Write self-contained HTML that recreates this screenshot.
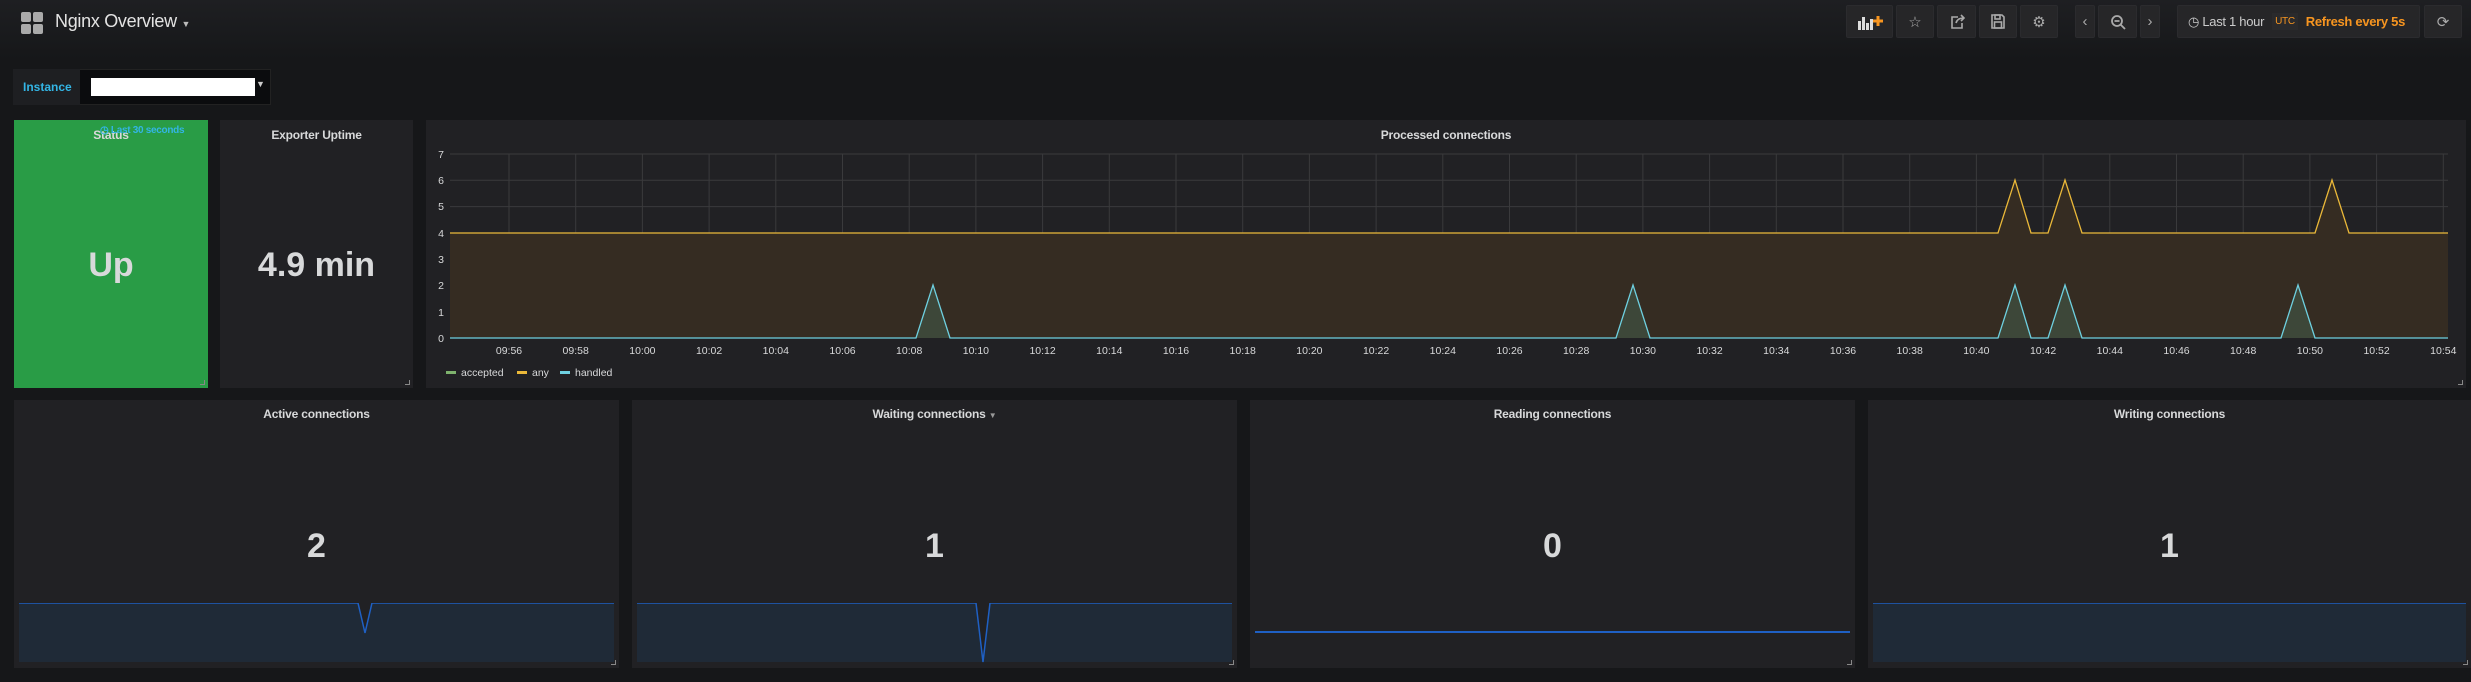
<!DOCTYPE html>
<html><head><meta charset="utf-8"><style>
*{margin:0;padding:0;box-sizing:border-box}
body{width:2471px;height:682px;background:#161719;font-family:"Liberation Sans",sans-serif;color:#d8d9da;position:relative;overflow:hidden}
.a{position:absolute;white-space:nowrap}
.panel{position:absolute;background:#212124}
.pt{position:absolute;left:0;right:0;text-align:center;font-size:12px;font-weight:bold;color:#d8d9da;letter-spacing:-0.2px}
.big{position:absolute;left:0;right:0;text-align:center;font-weight:bold;font-size:34px;color:#d8d9da}
.btn{position:absolute;top:5px;height:33px;background:#262628;border:1px solid #2b2b2e;border-radius:2px;display:flex;align-items:center;justify-content:center;color:#aaa;font-size:15px;white-space:nowrap}
.rz{position:absolute;right:3px;bottom:3px;width:5px;height:5px;border-right:1px solid #888;border-bottom:1px solid #888}
</style></head><body>
<div class="a" style="left:0;top:0;width:2471px;height:60px;background:linear-gradient(#1e1f22,#161719)"></div>
<div class="a" style="left:21px;top:12px;width:10px;height:10px;background:#aaa;border-radius:2px"></div>
<div class="a" style="left:33px;top:12px;width:10px;height:10px;background:#aaa;border-radius:2px"></div>
<div class="a" style="left:21px;top:24px;width:10px;height:10px;background:#aaa;border-radius:2px"></div>
<div class="a" style="left:33px;top:24px;width:10px;height:10px;background:#aaa;border-radius:2px"></div>
<div class="a" style="left:55px;top:11px;font-size:18px;color:#e3e3e3;letter-spacing:-0.3px">Nginx Overview <span style="font-size:9px;color:#bbb">▼</span></div>
<div class="btn" style="left:1846px;width:47px"><svg width="26" height="18"><g fill="#ddd"><rect x="1" y="8" width="3" height="9"/><rect x="5" y="4" width="3" height="13"/><rect x="9" y="10" width="3" height="7"/><rect x="13" y="6" width="3" height="11"/></g><path d="M21 3v10M16 8h10" stroke="#f79520" stroke-width="3"/></svg></div>
<div class="btn" style="left:1896px;width:38px">☆</div>
<div class="btn" style="left:1937px;width:39px"><svg width="16" height="16" fill="none" stroke="#aaa" stroke-width="1.6"><path d="M9 3H3v11h10V9"/><path d="M7 9c1-4 4-5 8-5M12 1l3 3-3 3"/></svg></div>
<div class="btn" style="left:1979px;width:38px"><svg width="14" height="15" fill="none" stroke="#aaa" stroke-width="1.6"><path d="M1 1h10l2 2v11H1z"/><rect x="4" y="1" width="5" height="4"/><rect x="3.5" y="8" width="7" height="6"/></svg></div>
<div class="btn" style="left:2020px;width:38px">⚙</div>
<div class="btn" style="left:2075px;width:20px">‹</div>
<div class="btn" style="left:2098px;width:39px"><svg width="16" height="16" fill="none" stroke="#aaa" stroke-width="1.8"><circle cx="7" cy="7" r="5"/><path d="M11 11l4 4M4.5 7h5"/></svg></div>
<div class="btn" style="left:2140px;width:20px">›</div>
<div class="btn" style="left:2177px;width:243px;justify-content:flex-start;padding-left:10px;font-size:13px;letter-spacing:-0.3px"><span style="color:#ccc">◷ Last 1 hour</span><span style="margin-left:8px;background:#2a2a2c;color:#f79520;font-size:10px;padding:3px 3px">UTC</span><span style="margin-left:8px;color:#f79520;font-weight:bold">Refresh every 5s</span></div>
<div class="btn" style="left:2424px;width:38px">⟳</div>
<div class="a" style="left:13px;top:69px;width:258px;height:36px;background:#0b0c0e;border:1px solid #222"></div>
<div class="a" style="left:13px;top:69px;width:67px;height:36px;background:#1e1f22;color:#33b5e5;font-size:12px;font-weight:bold;line-height:36px;padding-left:10px">Instance</div>
<div class="a" style="left:91px;top:78px;width:164px;height:18px;background:#fff"></div>
<div class="a" style="left:256px;top:79px;font-size:9px;color:#ccc">▼</div>
<div class="panel" style="left:14px;top:120px;width:194px;height:268px;background:#299c46"><div class="pt" style="top:8px">Status</div><div class="a" style="left:86px;top:5px;font-size:10px;font-weight:bold;color:#33b5e5;letter-spacing:-0.3px">◷ Last 30 seconds</div><div class="big" style="top:126px">Up</div><div class="rz"></div></div>
<div class="panel" style="left:220px;top:120px;width:193px;height:268px"><div class="pt" style="top:8px">Exporter Uptime</div><div class="big" style="top:126px">4.9 min</div><div class="rz"></div></div>
<div class="panel" style="left:426px;top:120px;width:2040px;height:268px"><div class="pt" style="top:8px">Processed connections</div><div class="rz"></div></div>
<svg class="a" style="left:0;top:0" width="2471" height="400" font-family="Liberation Sans" font-size="10.5" fill="#d8d9da">
<g stroke="#3a3a3c" stroke-width="1">
<line x1="450" x2="2448" y1="154" y2="154"/><line x1="450" x2="2448" y1="180.3" y2="180.3"/><line x1="450" x2="2448" y1="206.6" y2="206.6"/><line x1="450" x2="2448" y1="232.9" y2="232.9"/><line x1="450" x2="2448" y1="259.1" y2="259.1"/><line x1="450" x2="2448" y1="285.4" y2="285.4"/><line x1="450" x2="2448" y1="311.7" y2="311.7"/>
</g>
<g id="v" stroke="#3a3a3c"></g>
<path d="M450 233H1998L2015 180L2031 233H2048L2065 180L2082 233H2315L2332 180L2349 233H2448V338H450Z" fill="#352c22" stroke="none"/>
<path d="M450 233H1998L2015 180L2031 233H2048L2065 180L2082 233H2315L2332 180L2349 233H2448" fill="none" stroke="#eab839" stroke-width="1.3"/>
<path d="M450 338H916L933 285L950 338H1616L1633 285L1650 338H1998L2015 285L2031 338H2048L2065 285L2082 338H2281L2298 285L2315 338H2448Z" fill="#3d4739"/>
<path d="M450 338H916L933 285L950 338H1616L1633 285L1650 338H1998L2015 285L2031 338H2048L2065 285L2082 338H2281L2298 285L2315 338H2448" fill="none" stroke="#6ed0e0" stroke-width="1.3"/>
<g text-anchor="end"><text x="444" y="158">7</text><text x="444" y="184">6</text><text x="444" y="210">5</text><text x="444" y="237">4</text><text x="444" y="263">3</text><text x="444" y="289">2</text><text x="444" y="316">1</text><text x="444" y="342">0</text></g>
<g id="t" text-anchor="middle"></g>
<rect x="446" y="371" width="10" height="3" fill="#7eb26d"/><text x="461" y="376">accepted</text>
<rect x="517" y="371" width="10" height="3" fill="#eab839"/><text x="532" y="376">any</text>
<rect x="560" y="371" width="10" height="3" fill="#6ed0e0"/><text x="575" y="376">handled</text>
</svg>
<div class="panel" style="left:14px;top:400px;width:605px;height:268px"><div class="pt" style="top:7px">Active connections</div><div class="big" style="top:127px">2</div>
<svg class="a" style="left:5px;top:203px" width="595" height="60"><path d="M0 0H339L346 30L353 0H595V59H0Z" fill="#1f2a37"/><path d="M0 0H339L346 30L353 0H595" fill="none" stroke="#1f60c4" stroke-width="1.5"/></svg><div class="rz"></div></div>
<div class="panel" style="left:632px;top:400px;width:605px;height:268px"><div class="pt" style="top:7px">Waiting connections <span style="font-size:8px;color:#999">▼</span></div><div class="big" style="top:127px">1</div>
<svg class="a" style="left:5px;top:203px" width="595" height="60"><path d="M0 0H339L346 59L353 0H595V59H0Z" fill="#1f2a37"/><path d="M0 0H339L346 59L353 0H595" fill="none" stroke="#1f60c4" stroke-width="1.5"/></svg><div class="rz"></div></div>
<div class="panel" style="left:1250px;top:400px;width:605px;height:268px"><div class="pt" style="top:7px">Reading connections</div><div class="big" style="top:127px">0</div>
<div class="a" style="left:5px;top:231px;width:595px;height:2px;background:#1f60c4"></div><div class="rz"></div></div>
<div class="panel" style="left:1868px;top:400px;width:603px;height:268px"><div class="pt" style="top:7px">Writing connections</div><div class="big" style="top:127px">1</div>
<svg class="a" style="left:5px;top:203px" width="593" height="60"><path d="M0 0H593V59H0Z" fill="#1f2a37"/><path d="M0 0H593" stroke="#1f60c4" stroke-width="1.5"/></svg><div class="rz"></div></div>
<script>
var v=document.getElementById('v'),t=document.getElementById('t'),ns="http://www.w3.org/2000/svg";
for(var k=0;k<30;k++){var x=509+66.7*k;var l=document.createElementNS(ns,'line');l.setAttribute('x1',x);l.setAttribute('x2',x);l.setAttribute('y1',154);l.setAttribute('y2',338);v.appendChild(l);
var m=56+2*k,h=9+Math.floor(m/60);m=m%60;var s=document.createElementNS(ns,'text');s.setAttribute('x',x);s.setAttribute('y',354);s.textContent=(h<10?'0'+h:h)+':'+(m<10?'0'+m:m);t.appendChild(s);}
</script>
</body></html>
